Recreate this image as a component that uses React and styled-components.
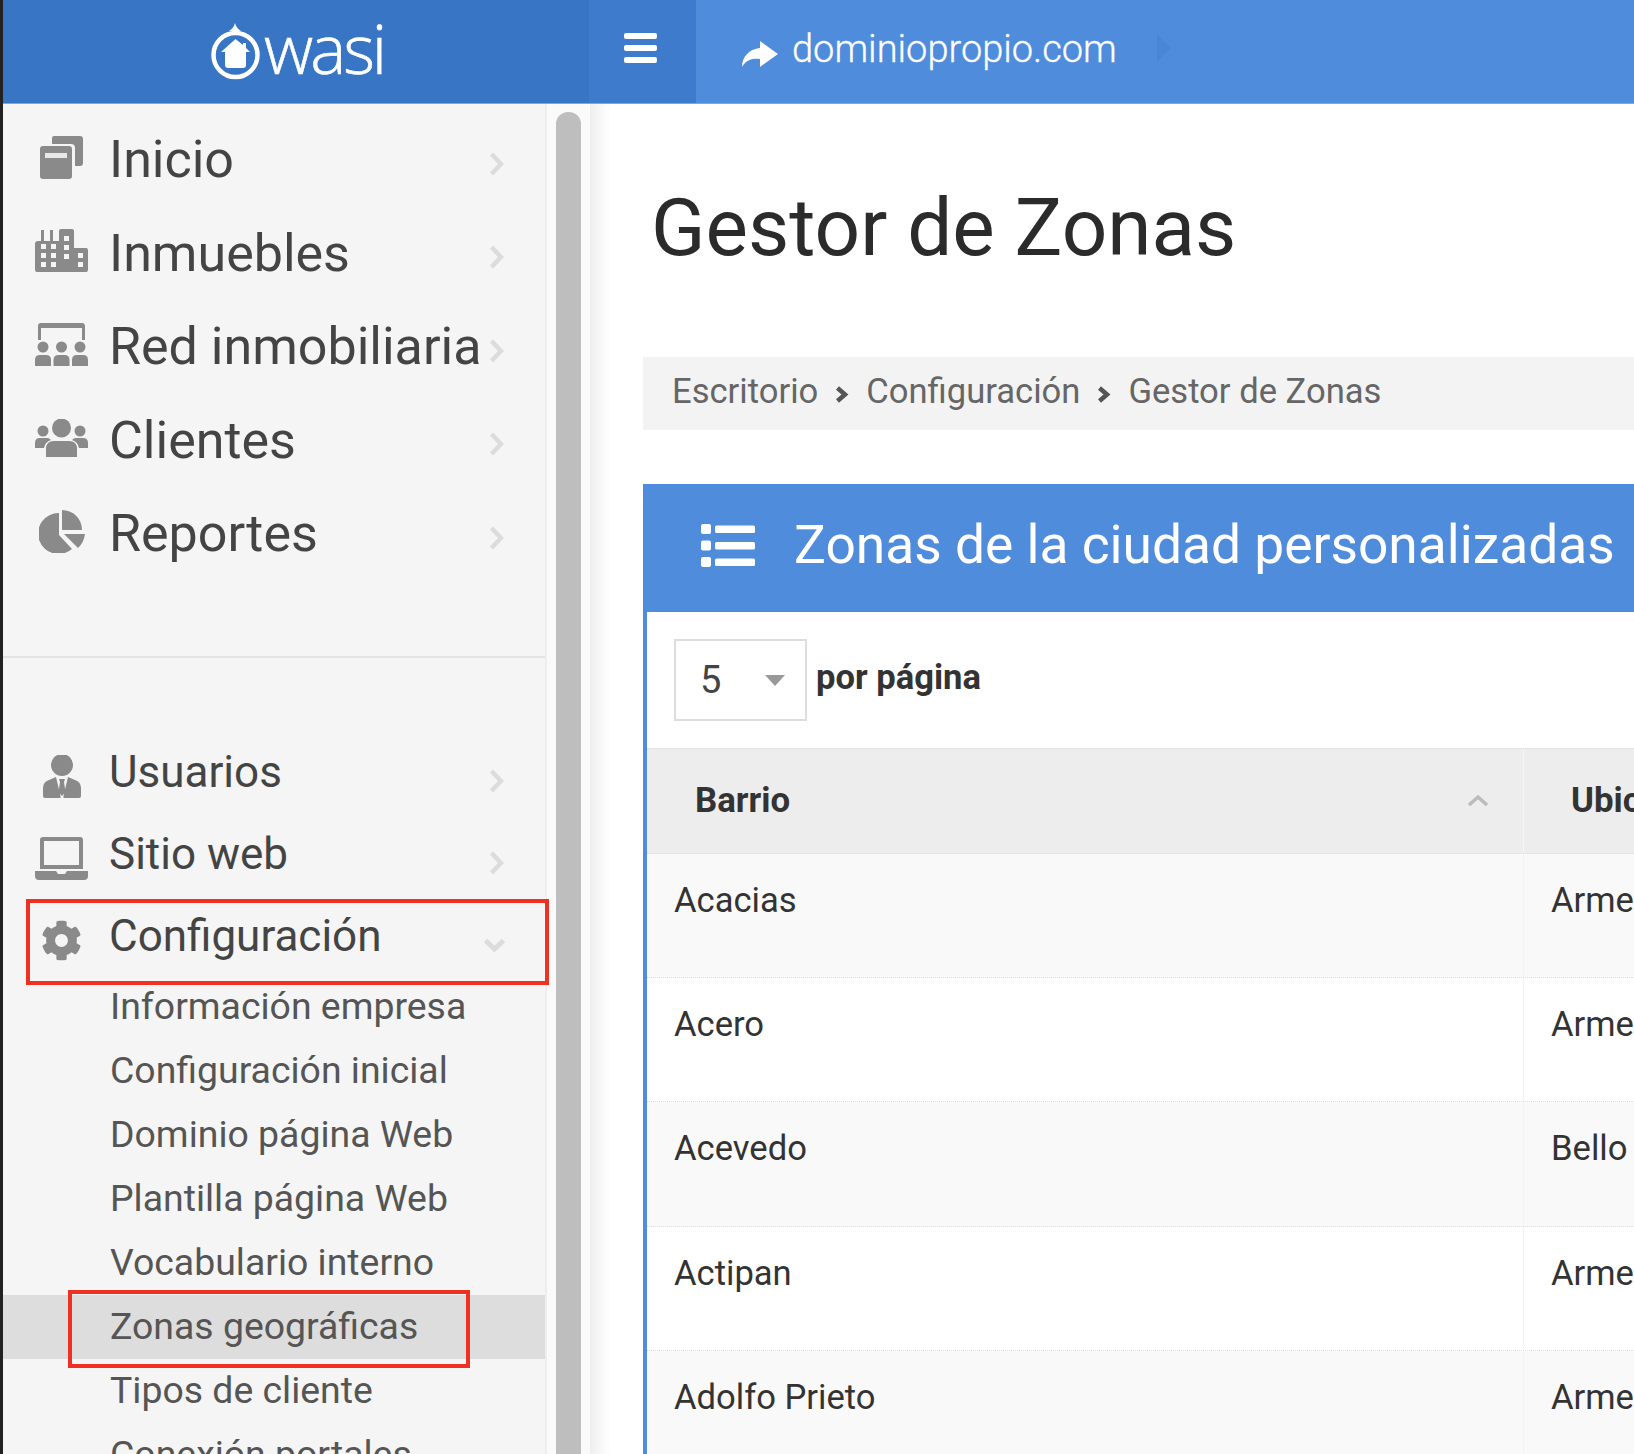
import React from "react";
import styled, { createGlobalStyle } from "styled-components";
import { FaCog } from "react-icons/fa";

const GlobalStyle = createGlobalStyle`
  html, body {
    margin: 0;
    padding: 0;
    background: #fff;
    font-family: Roboto, "Liberation Sans", sans-serif;
  }
`;

const LogoMark = () => (
  <svg width="51" height="57" viewBox="0 0 51 57">
    <path d="M25 0 C26 4 28 6 31 8 L19 8 C22 6 24 4 25 0 Z" fill="#fff" />
    <circle cx="25.5" cy="32" r="22" fill="none" stroke="#fff" strokeWidth="4.5" />
    <path d="M25.5 16 L33 22 V20 H36 V25 L40 29 H36 V42 Q36 45 33 45 H18 Q15 45 15 42 V29 H11 Z" fill="#fff" />
  </svg>
);

const MenuIcon = () => (
  <svg width="33" height="30" viewBox="0 0 33 30" fill="#fff">
    <rect y="0" width="33" height="6" rx="2" />
    <rect y="12" width="33" height="6" rx="2" />
    <rect y="24" width="33" height="6" rx="2" />
  </svg>
);

const ShareIcon = () => (
  <DomainIcon width="36" height="26" viewBox="0 0 36 26" fill="#fff">
    <path d="M36 13 L18 0 V7 C7 8 0 16 0 26 C4 19 10 17 18 18 V26 Z" />
  </DomainIcon>
);

const CardsIcon = () => (
  <svg width="43" height="43" viewBox="0 0 43 43">
    <path d="M14 0 H40 Q43 0 43 3 V27 Q43 30 40 30 H35 V12 Q35 8 31 8 H12 V2 Q12 0 14 0 Z" fill="#8a8a8a" />
    <rect x="0" y="10" width="32" height="33" rx="3" fill="#8a8a8a" />
    <rect x="5" y="17" width="22" height="5" fill="#e8e8e8" />
  </svg>
);

const BuildingsIcon = () => {
  const windows = [
    [6, 15], [16, 15], [6, 24], [16, 24], [6, 33], [16, 33],
    [29, 7], [29, 16], [29, 25], [43, 24], [43, 33],
  ];
  return (
    <svg width="53" height="43" viewBox="0 0 53 43">
      <path d="M0 15 Q0 12 3 12 H6 V1 H9 V12 H15 V1 H18 V12 H24 V2 Q24 0 26 0 H37 Q39 0 39 2 V19 H51 Q53 19 53 21 V41 Q53 43 51 43 H2 Q0 43 0 41 Z" fill="#8a8a8a" />
      {windows.map(([x, y]) => (
        <rect key={`${x}-${y}`} x={x} y={y} width="5" height="5" fill="#f5f5f5" />
      ))}
    </svg>
  );
};

const NetworkIcon = () => (
  <svg width="53" height="43" viewBox="0 0 53 43" fill="#8a8a8a">
    <path d="M3 17 V3 Q3 0 6 0 H47 Q50 0 50 3 V17 H47 V5 H6 V17 Z" />
    {[8, 26.5, 45].map(x => (
      <g key={x}>
        <circle cx={x} cy="24" r="5.5" />
        <path d={`M${x - 8} 43 V37 Q${x - 8} 32 ${x - 3} 32 H${x + 3} Q${x + 8} 32 ${x + 8} 37 V43 Z`} />
      </g>
    ))}
  </svg>
);

const ClientsIcon = () => (
  <svg width="53" height="38" viewBox="0 0 53 38" fill="#8a8a8a">
    <circle cx="26.5" cy="9" r="9.5" />
    <circle cx="8" cy="12" r="5.5" />
    <circle cx="45" cy="12" r="5.5" />
    <path d="M11 38 V30 Q11 22 19 22 H34 Q42 22 42 30 V38 Q42 38 40 38 H13 Z" />
    <path d="M0 29 V24 Q0 19 5 19 H13 Q15 20 16 21 Q10 23 9 29 Z" />
    <path d="M53 29 V24 Q53 19 48 19 H40 Q38 20 37 21 Q43 23 44 29 Z" />
  </svg>
);

const PieIcon = () => (
  <svg width="46" height="43" viewBox="0 0 46 43" fill="#8a8a8a">
    <path d="M20 3 A20.5 20.5 0 1 0 33 39 L20 25 Z" />
    <path d="M23 0 A20 20 0 0 1 43 20 L23 20 V0 Z" />
    <path d="M25 24 H46 A23 23 0 0 1 39 38 Z" />
  </svg>
);

const UserIcon = () => (
  <svg width="38" height="43" viewBox="0 0 38 43" fill="#8a8a8a">
    <ellipse cx="19" cy="10" rx="11" ry="11" />
    <path d="M0 41 V33 Q0 27 6 25 L13 22 L17.5 41 V43 H2 Q0 43 0 41 Z" />
    <path d="M38 41 V33 Q38 27 32 25 L25 22 L20.5 41 V43 H36 Q38 43 38 41 Z" />
    <path d="M16 24 H22 L21 27 L22.5 37 L19 41 L15.5 37 L17 27 Z" />
  </svg>
);

const LaptopIcon = () => (
  <svg width="53" height="43" viewBox="0 0 53 43" fill="#8a8a8a">
    <path d="M5 3 Q5 0 8 0 H45 Q48 0 48 3 V32 H5 Z M9 4 V28 H44 V4 Z" fillRule="evenodd" />
    <path d="M0 34 H21 L23 37 H30 L32 34 H53 V39 Q53 43 49 43 H4 Q0 43 0 39 Z" />
  </svg>
);

const ListIcon = () => (
  <svg width="54" height="43" viewBox="0 0 54 43" fill="#fff">
    {[0, 16.5, 33].map(y => (
      <g key={y}>
        <rect x="0" y={y} width="10" height="10" rx="2" />
        <rect x="14" y={y + 1.5} width="40" height="7.5" rx="1.5" />
      </g>
    ))}
  </svg>
);

const Chevron = ({ down, low }) => (
  <ChevronBox $down={down} $low={low}>
    {down ? (
      <svg width="23" height="14" viewBox="0 0 23 14">
        <path d="M2.5 2.5 L11.5 11 L20.5 2.5" fill="none" stroke="#dcdcdc" strokeWidth="5" />
      </svg>
    ) : (
      <svg width="15" height="24" viewBox="0 0 15 24">
        <path d="M2.5 2 L12 12 L2.5 22" fill="none" stroke="#dcdcdc" strokeWidth="4.5" />
      </svg>
    )}
  </ChevronBox>
);

const CrumbArrow = () => (
  <CrumbBox>
    <svg width="14" height="17" viewBox="0 0 14 17">
      <path d="M2.5 2 L10 8.5 L2.5 15" fill="none" stroke="#555" strokeWidth="4.5" />
    </svg>
  </CrumbBox>
);

const mainItems = [
  { label: "Inicio", icon: <CardsIcon /> },
  { label: "Inmuebles", icon: <BuildingsIcon /> },
  { label: "Red inmobiliaria", icon: <NetworkIcon /> },
  { label: "Clientes", icon: <ClientsIcon /> },
  { label: "Reportes", icon: <PieIcon /> },
];

const subItems = [
  "Información empresa",
  "Configuración inicial",
  "Dominio página Web",
  "Plantilla página Web",
  "Vocabulario interno",
  "Zonas geográficas",
  "Tipos de cliente",
  "Conexión portales",
];

const rows = [
  ["Acacias", "Armenia"],
  ["Acero", "Armenia"],
  ["Acevedo", "Bello"],
  ["Actipan", "Armenia"],
  ["Adolfo Prieto", "Armenia"],
];

function App() {
  return (
    <>
      <GlobalStyle />
      <Page>
        <TopBar>
          <LogoArea>
            <LogoMark />
            <LogoText>wasi</LogoText>
          </LogoArea>
          <MenuButton>
            <MenuIcon />
          </MenuButton>
          <DomainArea>
            <ShareIcon />
            <DomainText>dominiopropio.com</DomainText>
            <DomainTip />
          </DomainArea>
        </TopBar>
        <Body>
          <Sidebar>
            <MainNav>
              {mainItems.map(item => (
                <MainRow key={item.label}>
                  <IconSlot $lift={-5}>{item.icon}</IconSlot>
                  <MainLabel>{item.label}</MainLabel>
                  <Chevron />
                </MainRow>
              ))}
            </MainNav>
            <Divider />
            <SecondaryNav>
              <SecondaryRow>
                <IconSlot $lift={8}>
                  <UserIcon />
                </IconSlot>
                <SecondaryLabel>Usuarios</SecondaryLabel>
                <Chevron low />
              </SecondaryRow>
              <SecondaryRow>
                <IconSlot $lift={8}>
                  <LaptopIcon />
                </IconSlot>
                <SecondaryLabel>Sitio web</SecondaryLabel>
                <Chevron low />
              </SecondaryRow>
              <SecondaryRow>
                <IconSlot $lift={8}>
                  <FaCog size="41" color="#8a8a8a" />
                </IconSlot>
                <SecondaryLabel>Configuración</SecondaryLabel>
                <Chevron down low />
                <ConfigMark />
              </SecondaryRow>
            </SecondaryNav>
            <SubNav>
              {subItems.map(item => (
                <SubRow key={item} $active={item === "Zonas geográficas"}>
                  {item}
                  {item === "Zonas geográficas" && <ZoneMark />}
                </SubRow>
              ))}
            </SubNav>
          </Sidebar>
          <ScrollTrack>
            <ScrollThumb />
          </ScrollTrack>
          <Main>
            <PageTitle>Gestor de Zonas</PageTitle>
            <Breadcrumb>
              <span>Escritorio</span>
              <CrumbArrow />
              <span>Configuración</span>
              <CrumbArrow />
              <span>Gestor de Zonas</span>
            </Breadcrumb>
            <Panel>
              <PanelHead>
                <ListIcon />
                <PanelTitle>Zonas de la ciudad personalizadas</PanelTitle>
              </PanelHead>
              <PanelBody>
                <PageSizeBar>
                  <PageSelect>
                    5
                    <SelectCaret />
                  </PageSelect>
                  <PageSizeLabel>por página</PageSizeLabel>
                </PageSizeBar>
                <HeadRow>
                  <HeadCell>
                    Barrio
                    <SortCaret viewBox="0 0 22 12" width="22" height="12">
                      <path d="M2 11 L11 3 L20 11" fill="none" stroke="#bbb" strokeWidth="3.5" />
                    </SortCaret>
                  </HeadCell>
                  <HeadCell $second>Ubicación</HeadCell>
                </HeadRow>
                {rows.map(([zone, city], i) => (
                  <BodyRow key={zone} $striped={i % 2 === 0}>
                    <BodyCell>{zone}</BodyCell>
                    <BodyCell $second>{city}</BodyCell>
                  </BodyRow>
                ))}
              </PanelBody>
            </Panel>
          </Main>
        </Body>
      </Page>
    </>
  );
}

export default App;

const Page = styled.div`
  width: 1634px;
  height: 1454px;
  overflow: hidden;
  box-sizing: border-box;
  border-left: 3px solid #222;
  display: flex;
  flex-direction: column;
`;

const TopBar = styled.header`
  display: flex;
  height: 104px;
  flex: none;
  box-sizing: border-box;
  background: #4f8cdc;
  border-bottom: 1px solid #7ba8e6;
`;

const LogoArea = styled.div`
  width: 586px;
  flex: none;
  background: #3875c4;
  display: flex;
  align-items: center;
  padding-left: 207px;
  box-sizing: border-box;
`;

const LogoText = styled.span`
  font-family: "Open Sans", sans-serif;
  font-weight: 300;
  font-size: 68px;
  line-height: 66px;
  color: #fff;
  letter-spacing: -3px;
  margin-left: 3px;
  margin-top: -8px;
  -webkit-text-stroke: 0.6px #fff;
`;

const MenuButton = styled.div`
  width: 107px;
  flex: none;
  background: #3f7bcc;
  display: flex;
  align-items: center;
  padding-left: 35px;
  padding-bottom: 8px;
  box-sizing: border-box;
`;

const DomainArea = styled.div`
  display: flex;
  align-items: center;
  padding-left: 46px;
  padding-bottom: 6px;
  flex: 1;
`;

const DomainIcon = styled.svg`
  margin-top: 10px;
`;

const DomainText = styled.span`
  font-size: 38px;
  font-weight: 300;
  color: #fff;
  margin-left: 14px;
  -webkit-text-stroke: 0.3px #fff;
`;

const DomainTip = styled.i`
  width: 0;
  height: 0;
  margin-left: 40px;
  margin-top: -2px;
  border-left: 14px solid #4a86d8;
  border-top: 14px solid transparent;
  border-bottom: 14px solid transparent;
`;

const Body = styled.div`
  display: flex;
  flex: 1;
  min-height: 0;
`;

const Sidebar = styled.nav`
  width: 542px;
  flex: none;
  background: #f5f5f5;
  border-right: 2px solid #eee;
  box-sizing: content-box;
  padding-top: 9px;
`;

const MainNav = styled.div`
  height: 543px;
`;

const MainRow = styled.div`
  display: flex;
  align-items: center;
  height: 93.5px;
  padding-left: 32px;
`;

const IconSlot = styled.div`
  width: 53px;
  display: flex;
  justify-content: center;
  flex: none;
  margin-top: ${({ $lift }) => $lift}px;
`;

const MainLabel = styled.span`
  font-size: 52px;
  color: #444;
  margin-left: 21px;
  width: 380px;
  flex: none;
  white-space: nowrap;
`;

const ChevronBox = styled.span`
  display: flex;
  margin-top: ${({ $low }) => ($low ? "18px" : "8px")};
  margin-left: ${({ $down }) => ($down ? "-6px" : "0")};
`;

const Divider = styled.div`
  height: 2px;
  background: #e3e3e3;
`;

const SecondaryNav = styled.div`
  padding-top: 73px;
`;

const SecondaryRow = styled.div`
  display: flex;
  align-items: center;
  height: 82px;
  padding-left: 32px;
  position: relative;
`;

const SecondaryLabel = styled.span`
  font-size: 44px;
  color: #444;
  margin-left: 21px;
  width: 380px;
  flex: none;
`;

const ConfigMark = styled.div`
  position: absolute;
  left: 23px;
  top: 4px;
  width: 523px;
  height: 86px;
  box-sizing: border-box;
  border: 4px solid #ee3124;
`;

const SubNav = styled.div`
  margin-top: -2px;
`;

const SubRow = styled.div`
  height: 64px;
  line-height: 62px;
  font-size: 37.4px;
  color: #555;
  padding-left: 107px;
  position: relative;
  background: ${({ $active }) => ($active ? "#ddd" : "transparent")};
`;

const ZoneMark = styled.div`
  position: absolute;
  left: 65px;
  top: -5px;
  width: 402px;
  height: 78px;
  box-sizing: border-box;
  border: 4px solid #ee3124;
`;

const ScrollTrack = styled.div`
  width: 43px;
  flex: none;
  background: #fafafa;
  padding: 8px 9px 0 9px;
  box-sizing: border-box;
`;

const ScrollThumb = styled.div`
  width: 25px;
  height: 100%;
  margin-bottom: -40px;
  background: #bebebe;
  border-radius: 12px 12px 0 0;
`;

const Main = styled.main`
  flex: 1;
  min-width: 0;
  background: #fff linear-gradient(to right, #eee, #fff 20px);
  padding-left: 53px;
  box-sizing: border-box;
`;

const PageTitle = styled.h1`
  margin: 0 0 0 8px;
  padding-top: 79px;
  font-size: 80px;
  line-height: 90px;
  font-weight: 400;
  color: #2b2b2b;
`;

const Breadcrumb = styled.div`
  margin-top: 84px;
  height: 73px;
  background: #f3f3f3;
  display: flex;
  align-items: center;
  padding: 0 0 6px 29px;
  box-sizing: border-box;
  font-size: 34.6px;
  color: #666;
`;

const CrumbBox = styled.span`
  display: flex;
  margin: 8px 17px 0 17px;
`;

const Panel = styled.section`
  margin-top: 54px;
  border-left: 4px solid #4f8cdc;
`;

const PanelHead = styled.div`
  height: 128px;
  margin-left: -4px;
  background: #4f8cdc;
  display: flex;
  align-items: center;
  padding: 0 0 6px 58px;
  box-sizing: border-box;
`;

const PanelTitle = styled.h2`
  margin: 0 0 0 39px;
  font-size: 53.3px;
  font-weight: 400;
  color: #fff;
  white-space: nowrap;
`;

const PanelBody = styled.div`
  background: #fff;
`;

const PageSizeBar = styled.div`
  display: flex;
  align-items: center;
  height: 136px;
  padding-left: 27px;
`;

const PageSelect = styled.div`
  width: 133px;
  height: 82px;
  box-sizing: border-box;
  border: 2px solid #ddd;
  display: flex;
  align-items: center;
  justify-content: space-between;
  padding: 0 20px 0 24px;
  font-size: 38px;
  color: #444;
`;

const SelectCaret = styled.i`
  width: 0;
  height: 0;
  border-top: 11px solid #999;
  border-left: 10px solid transparent;
  border-right: 10px solid transparent;
`;

const PageSizeLabel = styled.span`
  margin: 0 0 6px 9px;
  font-size: 34.6px;
  font-weight: 700;
  color: #333;
`;

const HeadRow = styled.div`
  display: grid;
  grid-template-columns: 877px 400px;
  height: 106px;
  background: #ededed;
  border-top: 1px dotted #ddd;
  border-bottom: 1px dotted #ddd;
  box-sizing: border-box;
`;

const HeadCell = styled.div`
  display: flex;
  align-items: center;
  padding: 0 0 3px ${({ $second }) => ($second ? "47px" : "48px")};
  font-size: 34.8px;
  font-weight: 700;
  color: #333;
  position: relative;
  white-space: nowrap;
  border-right: ${({ $second }) => ($second ? "none" : "1px solid #f5f5f5")};
`;

const SortCaret = styled.svg`
  position: absolute;
  right: 34px;
  top: 45px;
`;

const BodyRow = styled.div`
  display: grid;
  grid-template-columns: 877px 400px;
  height: 124.2px;
  background: ${({ $striped }) => ($striped ? "#f9f9f9" : "#fff")};
  border-bottom: 1px dotted #ddd;
  box-sizing: border-box;
`;

const BodyCell = styled.div`
  padding: 24px 0 0 27px;
  font-size: 34.6px;
  line-height: 44px;
  color: #333;
  border-right: ${({ $second }) => ($second ? "none" : "1px solid #f3f3f3")};
`;
